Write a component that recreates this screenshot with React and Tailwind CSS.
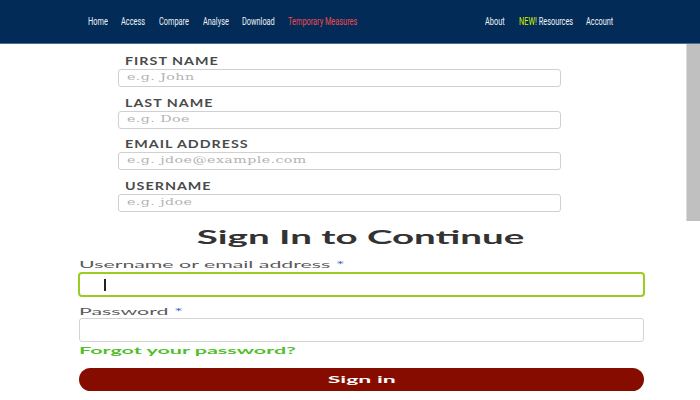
import React from 'react';

const navLeft = [
    { label: 'Home', w: 'w-[18px]' },
    { label: 'Access', w: 'w-[23px]' },
    { label: 'Compare', w: 'w-[29px]' },
    { label: 'Analyse', w: 'w-[24px]' },
    { label: 'Download', w: 'w-[31px]' },
];

const signupFields = [
    { label: 'FIRST NAME', placeholder: 'e.g. John' },
    { label: 'LAST NAME', placeholder: 'e.g. Doe' },
    { label: 'EMAIL ADDRESS', placeholder: 'e.g. jdoe@example.com' },
    { label: 'USERNAME', placeholder: 'e.g. jdoe' },
];

const Squish = ({ children, className = '' }) => (
    <span className={`inline-block whitespace-nowrap origin-left scale-x-[0.64] ${className}`}>{children}</span>
);

const App = () => {
    return (
        <div className="w-[700px] h-[400px] bg-white overflow-hidden font-['Lato',sans-serif]">
            {/* Top nav */}
            <header className="h-[44px] bg-[#022c57] border-b border-[#4b6f93] flex items-center font-['Roboto',sans-serif] text-[11.5px] text-[#eef2f6]">
                <nav className="flex items-center gap-[15px] pl-[88px]">
                    {navLeft.map((item) => (
                        <a key={item.label} className={`${item.w} block`}>
                            <Squish>{item.label}</Squish>
                        </a>
                    ))}
                    <a className="w-[66px] block text-[#f0474f]">
                        <Squish>Temporary Measures</Squish>
                    </a>
                </nav>
                <nav className="flex items-center gap-[15px] ml-[131px]">
                    <a className="w-[19px] block"><Squish>About</Squish></a>
                    <a className="w-[52px] block">
                        <Squish><span className="text-[#d4f000]">NEW!</span> Resources</Squish>
                    </a>
                    <a className="w-[25px] block"><Squish>Account</Squish></a>
                </nav>
            </header>

            <div className="flex">
                {/* Sign up form */}
                <div className="flex-1">
                    <div className="w-[443px] ml-[118px] pt-[9px] flex flex-col">
                        {signupFields.map((f) => (
                            <div key={f.label} className="flex flex-col mb-[7.5px]">
                                <label className="pl-[7px] h-[16px] text-[11px] font-bold tracking-[0.07em] text-[#4a4a4a] leading-[16px]">
                                    <span className="inline-block whitespace-nowrap origin-left scale-x-[1.3]">{f.label}</span>
                                </label>
                                <div className="h-[18px] border border-[#d0d0d0] rounded-[3px] flex items-center pl-[8px] font-['DejaVu_Serif',serif] text-[9px] text-[#b3b3b3] tracking-[0.03em]">
                                    <span className="inline-block whitespace-nowrap origin-left scale-x-[1.58]">{f.placeholder}</span>
                                </div>
                            </div>
                        ))}
                    </div>
                </div>
                <div className="w-[14px] h-[177px] bg-[#c0c0c0] border-l border-[#dcdcdc]" />
            </div>

            {/* Sign in */}
            <div className="flex flex-col">
                <h2 className="h-[37px] pt-[2px] pl-[22px] flex justify-center text-[18px] font-bold text-[#333] leading-[28px]">
                    <span className="inline-block whitespace-nowrap scale-x-[2.14]">Sign In to Continue</span>
                </h2>
                <div className="ml-[79px] w-[565px] flex flex-col">
                    <label className="h-[13px] text-[10px] text-[#5a5a5a] leading-[13px]">
                        <span className="inline-block whitespace-nowrap origin-left scale-x-[2.13]">Username or email address <span className="text-[#3b63c9]">*</span></span>
                    </label>
                    <div className="mt-[1px] h-[25px] -ml-[1px] w-[567px] border-2 border-[#9bcc1f] rounded-[4px] flex items-center pl-[24px]">
                        <div className="w-[2px] h-[12px] bg-[#222]" />
                    </div>
                    <label className="mt-[7px] h-[14px] text-[10px] text-[#5a5a5a] leading-[14px]">
                        <span className="inline-block whitespace-nowrap origin-left scale-x-[2.13]">Password <span className="text-[#3b63c9]">*</span></span>
                    </label>
                    <div className="mt-[0px] h-[24px] border border-[#d4d4d4] rounded-[3px]" />
                    <a className="mt-[1px] h-[15px] text-[10px] font-bold text-[#4fbf2a] leading-[15px]">
                        <span className="inline-block whitespace-nowrap origin-left scale-x-[2.15]">Forgot your password?</span>
                    </a>
                    <button className="mt-[10px] h-[23px] rounded-full bg-[#870c00] text-white text-[10px] font-bold flex items-center justify-center">
                        <span className="inline-block whitespace-nowrap scale-x-[2.3]">Sign in</span>
                    </button>
                </div>
            </div>
        </div>
    );
};

export default App;
